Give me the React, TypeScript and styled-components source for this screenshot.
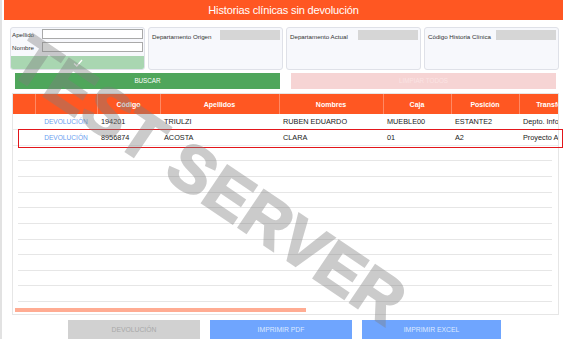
import React from 'react';
import styled, { createGlobalStyle } from 'styled-components';

const GlobalStyle = createGlobalStyle`
  html, body {
    margin: 0;
    padding: 0;
    background: #ffffff;
    overflow: hidden;
  }
  body {
    font-family: 'Liberation Sans', Arial, sans-serif;
  }
`;

type Column = { key: string; label: string; width: number };

const columns: Column[] = [
  { key: 'sel', label: '', width: 22 },
  { key: 'accion', label: '', width: 62 },
  { key: 'codigo', label: 'Código', width: 63 },
  { key: 'apellidos', label: 'Apellidos', width: 119 },
  { key: 'nombres', label: 'Nombres', width: 104 },
  { key: 'caja', label: 'Caja', width: 68 },
  { key: 'posicion', label: 'Posición', width: 68 },
  { key: 'transferencia', label: 'Transferencia', width: 80 },
  { key: 'fecha', label: 'Fecha', width: 100 },
  { key: 'usuario', label: 'Usuario', width: 120 },
  { key: 'observaciones', label: 'Observaciones', width: 190 },
];

const rows: Record<string, string>[] = [
  {
    codigo: '194201',
    apellidos: 'TRIULZI',
    nombres: 'RUBEN EDUARDO',
    caja: 'MUEBLE00',
    posicion: 'ESTANTE2',
    transferencia: 'Depto. Informática',
    fecha: '12/03/2021',
    usuario: 'ADMIN',
    observaciones: '',
  },
  {
    codigo: '8956874',
    apellidos: 'ACOSTA',
    nombres: 'CLARA',
    caja: '01',
    posicion: 'A2',
    transferencia: 'Proyecto Archivo',
    fecha: '04/08/2021',
    usuario: 'ADMIN',
    observaciones: '',
  },
];

const tableWidth = columns.reduce((sum, c) => sum + c.width, 0);

export default function App() {
  return (
    <>
      <GlobalStyle />
      <Page>
        <TitleBar>Historias clínicas sin devolución</TitleBar>

        <Filters>
          <SearchPanel>
            <FieldRow>
              <FieldLabel>Apellido</FieldLabel>
              <TextInput />
            </FieldRow>
            <FieldRow>
              <FieldLabel>Nombre</FieldLabel>
              <TextInput />
            </FieldRow>
            <ConfirmBar>
              <svg width="10" height="8" viewBox="0 0 10 8">
                <polyline points="1,4.5 3.8,7 9,1" fill="none" stroke="#ffffff" strokeWidth="1.3" />
              </svg>
            </ConfirmBar>
          </SearchPanel>
          <InfoPanel>
            <InfoRow>
              <FieldLabel>Departamento Origen</FieldLabel>
              <ValueBox />
            </InfoRow>
          </InfoPanel>
          <InfoPanel>
            <InfoRow>
              <FieldLabel>Departamento Actual</FieldLabel>
              <ValueBox />
            </InfoRow>
          </InfoPanel>
          <InfoPanel>
            <InfoRow>
              <FieldLabel>Código Historia Clínica</FieldLabel>
              <ValueBox />
            </InfoRow>
          </InfoPanel>
        </Filters>

        <ActionRow>
          <ActionButton $variant="search">BUSCAR</ActionButton>
          <ActionButton $variant="clear">LIMPIAR TODOS</ActionButton>
        </ActionRow>

        <TableWrap>
          <ScrollArea>
            <Grid style={{ width: tableWidth }}>
              <colgroup>
                {columns.map((c) => (
                  <col key={c.key} style={{ width: c.width }} />
                ))}
              </colgroup>
              <thead>
                <tr>
                  {columns.map((c) => (
                    <HeadCell key={c.key}>{c.label}</HeadCell>
                  ))}
                </tr>
              </thead>
              <tbody>
                {rows.map((r) => (
                  <tr key={r.codigo}>
                    <Cell />
                    <Cell $align="center">
                      <RowLink>DEVOLUCIÓN</RowLink>
                    </Cell>
                    {columns.slice(2).map((c) => (
                      <Cell key={c.key}>{r[c.key]}</Cell>
                    ))}
                  </tr>
                ))}
              </tbody>
            </Grid>
          </ScrollArea>
          <Filler>
            {Array.from({ length: 10 }).map((_, i) => (
              <FillerLine key={i} />
            ))}
          </Filler>
          <ScrollTrack>
            <ScrollThumb />
          </ScrollTrack>
          <SelectionFrame />
        </TableWrap>

        <FooterRow>
          <FooterButton $variant="disabled" $width={132}>DEVOLUCIÓN</FooterButton>
          <FooterButton $variant="primary" $width={142}>IMPRIMIR PDF</FooterButton>
          <FooterButton $variant="primary" $width={139}>IMPRIMIR EXCEL</FooterButton>
        </FooterRow>

        <Watermark>TEST SERVER</Watermark>
      </Page>
    </>
  );
}

const Page = styled.div`
  position: relative;
  width: 566px;
  height: 339px;
  box-sizing: border-box;
  border-left: 2px solid #e2e2e2;
  padding: 0 3px 0 2px;
  overflow: hidden;
  background: #ffffff;
`;

const TitleBar = styled.div`
  height: 20px;
  line-height: 21px;
  background: #ff5722;
  color: #ffffff;
  font-size: 11px;
  letter-spacing: -0.15px;
  text-align: center;
`;

const Filters = styled.div`
  display: flex;
  gap: 3px;
  padding: 7px 0 0 6px;
`;

const Panel = styled.div`
  width: 135px;
  height: 43px;
  box-sizing: border-box;
  border: 1px solid #dfe1e8;
  border-radius: 3px;
  background: #f7f8fc;
  overflow: hidden;
`;

const SearchPanel = styled(Panel)`
  display: flex;
  flex-direction: column;
  padding-top: 1px;
`;

const FieldRow = styled.div`
  display: flex;
  align-items: center;
  height: 10px;
  padding: 0 1px;
  margin-bottom: 3px;
`;

const FieldLabel = styled.span`
  font-size: 6.2px;
  color: #333333;
  white-space: nowrap;
`;

const TextInput = styled.div`
  margin-left: auto;
  width: 101px;
  height: 10px;
  box-sizing: border-box;
  border: 1px solid #a9a9a9;
  background: #ffffff;
`;

const ConfirmBar = styled.div`
  margin-top: auto;
  height: 13px;
  background: #a9d6b1;
  display: flex;
  align-items: center;
  justify-content: center;
`;

const InfoPanel = styled(Panel)`
  padding: 1px 2px 0 3px;
`;

const InfoRow = styled.div`
  display: flex;
  align-items: center;
  height: 10px;
  padding-top: 1px;
  & > span {
    padding-top: 2px;
  }
`;

const ValueBox = styled.div`
  margin-left: auto;
  width: 60px;
  height: 10px;
  background: #d6d6d6;
`;

const ActionRow = styled.div`
  display: flex;
  gap: 11px;
  padding: 3px 0 0 11px;
`;

const ActionButton = styled.div<{ $variant: 'search' | 'clear' }>`
  width: 265px;
  height: 16px;
  line-height: 16px;
  text-align: center;
  font-size: 6.3px;
  background: ${(p) => (p.$variant === 'search' ? '#4fa65b' : '#f6d4d4')};
  color: ${(p) => (p.$variant === 'search' ? '#ffffff' : '#fbe3e3')};
`;

const TableWrap = styled.div`
  position: relative;
  margin: 4px 0 0 8px;
  width: 547px;
  height: 222px;
  box-sizing: border-box;
  border: 1px solid #e6e6e6;
  background: #ffffff;
`;

const ScrollArea = styled.div`
  overflow: hidden;
  width: 100%;
`;

const Grid = styled.table`
  table-layout: fixed;
  border-collapse: collapse;
  font-family: 'Liberation Sans', Arial, sans-serif;
`;

const HeadCell = styled.th`
  height: 20px;
  padding: 0;
  background: #ff5722;
  color: #ffffff;
  font-size: 7px;
  font-weight: 700;
  text-align: center;
  white-space: nowrap;
  border-left: 1px solid rgba(255, 255, 255, 0.3);
  &:first-child {
    border-left: none;
  }
`;

const Cell = styled.td<{ $align?: 'center' | 'left' }>`
  height: 15.6px;
  padding: 0 4px;
  font-size: 7.3px;
  color: #222222;
  text-align: ${(p) => p.$align ?? 'left'};
  white-space: nowrap;
  overflow: hidden;
  border-bottom: 1px solid #ececec;
  box-sizing: border-box;
`;

const RowLink = styled.span`
  color: #6aa0ef;
  font-size: 6.6px;
`;

const Filler = styled.div`
  margin: 0 6px 0 5px;
`;

const FillerLine = styled.div`
  height: 15.65px;
  box-sizing: border-box;
  border-bottom: 1px solid #e6e6e6;
`;

const ScrollTrack = styled.div`
  margin: 6px 0 0 2px;
  height: 4px;
`;

const ScrollThumb = styled.div`
  width: 291px;
  height: 4px;
  background: #ffac93;
`;

const SelectionFrame = styled.div`
  position: absolute;
  left: 5px;
  top: 35px;
  width: 545px;
  height: 19px;
  box-sizing: border-box;
  border: 1px solid #e3161b;
  pointer-events: none;
`;

const FooterRow = styled.div`
  display: flex;
  gap: 10px;
  padding: 5px 0 0 64px;
`;

const FooterButton = styled.div<{ $variant: 'disabled' | 'primary'; $width: number }>`
  width: ${(p) => p.$width}px;
  height: 19px;
  line-height: 19px;
  text-align: center;
  font-size: 6.8px;
  background: ${(p) => (p.$variant === 'primary' ? '#6fa5fe' : '#d1d1d1')};
  color: ${(p) => (p.$variant === 'primary' ? '#dde9ff' : '#a8a8a8')};
`;

const Watermark = styled.span`
  position: absolute;
  left: 207px;
  top: 180px;
  transform: translate(-50%, -50%) rotate(34deg);
  font-family: 'Liberation Sans', Arial, sans-serif;
  font-size: 66px;
  font-weight: 700;
  line-height: 1;
  color: #808080;
  -webkit-text-stroke: 2px #808080;
  opacity: 0.4;
  white-space: nowrap;
  pointer-events: none;
`;
